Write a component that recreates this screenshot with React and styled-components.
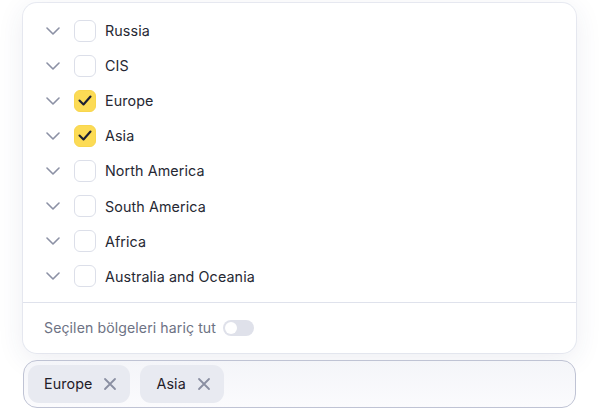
import React, { useState } from "react";
import styled, { createGlobalStyle } from "styled-components";

const Global = createGlobalStyle`
  html, body { margin: 0; padding: 0; background: #ffffff; }
  body { font-family: Inter, "Noto Sans", sans-serif; color: #21232b; }
`;

const Page = styled.div`
  width: 600px;
  height: 420px;
  box-sizing: border-box;
  padding: 3px 24px 0 23px;
  display: flex;
  flex-direction: column;
  gap: 7px;
  overflow: hidden;
`;

const Panel = styled.div`
  background: #fff;
  border-radius: 14px;
  box-shadow: 0 0 0 1px rgba(215, 219, 232, 0.55), 0 6px 28px rgba(40, 50, 110, 0.09);
  display: flex;
  flex-direction: column;
`;

const List = styled.ul`
  list-style: none;
  margin: 0;
  padding: 10px 0 8px 23px;
`;

const Row = styled.li`
  height: 35.1px;
  display: flex;
  align-items: center;
`;

const Chevron = styled.svg`
  width: 14px;
  height: 8px;
  flex: none;
  margin-right: 14px;
`;

const Box = styled.span`
  width: 22px;
  height: 22px;
  box-sizing: border-box;
  flex: none;
  border-radius: 6px;
  border: 1px solid ${(p) => (p.$on ? "#f8d64e" : "#dcdfe9")};
  background: ${(p) => (p.$on ? "#fcdb55" : "#fff")};
  display: flex;
  align-items: center;
  justify-content: center;
  margin-right: 9px;
`;

const Label = styled.span`
  font-size: 14.3px;
  color: #262833;
  letter-spacing: 0.1px;
`;

const Divider = styled.div`
  height: 1px;
  background: #dfe2ec;
`;

const Footer = styled.div`
  height: 50px;
  display: flex;
  align-items: center;
  padding-left: 21px;
  gap: 7px;
`;

const FooterText = styled.span`
  font-size: 14.1px;
  color: #6d7284;
  letter-spacing: 0.1px;
`;

const Toggle = styled.span`
  width: 31px;
  height: 16px;
  border-radius: 8px;
  background: #dfe1ea;
  position: relative;
  flex: none;
  &::after {
    content: "";
    position: absolute;
    left: 2px;
    top: 2px;
    width: 12px;
    height: 12px;
    border-radius: 50%;
    background: #fff;
  }
`;

const Field = styled.div`
  height: 48px;
  box-sizing: border-box;
  border: 1px solid #bfc3d4;
  border-radius: 14px;
  background: linear-gradient(180deg, #f4f5f9 0%, #fbfbfd 100%);
  padding: 0 4px;
  display: flex;
  align-items: center;
  gap: 10px;
`;

const Chip = styled.span`
  height: 38px;
  box-sizing: border-box;
  border-radius: 11px;
  background: #e8eaf1;
  display: flex;
  align-items: center;
  padding: 0 13px 0 16px;
  gap: 11px;
  font-size: 14.3px;
  letter-spacing: 0.1px;
  color: #1f2029;
`;

const Cross = styled.svg`
  width: 14px;
  height: 14px;
  flex: none;
`;

const regions = [
  "Russia",
  "CIS",
  "Europe",
  "Asia",
  "North America",
  "South America",
  "Africa",
  "Australia and Oceania",
];

function ChevronIcon() {
  return (
    <Chevron viewBox="0 0 14 8" fill="none">
      <path d="M1 1l6 6 6-6" stroke="#8c91a5" strokeWidth="1.6" strokeLinecap="round" strokeLinejoin="round" />
    </Chevron>
  );
}

function Check() {
  return (
    <svg width="14" height="11" viewBox="0 0 14 11" fill="none">
      <path d="M1.5 5.5l4 4 7-8" stroke="#1c1f33" strokeWidth="2.1" strokeLinecap="round" strokeLinejoin="round" />
    </svg>
  );
}

export default function App() {
  const [selected] = useState(["Europe", "Asia"]);
  return (
    <>
      <Global />
      <Page>
        <Panel>
          <List>
            {regions.map((r) => {
              const on = selected.includes(r);
              return (
                <Row key={r}>
                  <ChevronIcon />
                  <Box $on={on}>{on && <Check />}</Box>
                  <Label>{r}</Label>
                </Row>
              );
            })}
          </List>
          <Divider />
          <Footer>
            <FooterText>Seçilen bölgeleri hariç tut</FooterText>
            <Toggle />
          </Footer>
        </Panel>
        <Field>
          {selected.map((s) => (
            <Chip key={s}>
              {s}
              <Cross viewBox="0 0 14 14" fill="none">
                <path d="M2 2l10 10M12 2L2 12" stroke="#8a8fa2" strokeWidth="1.8" strokeLinecap="round" />
              </Cross>
            </Chip>
          ))}
        </Field>
      </Page>
    </>
  );
}
